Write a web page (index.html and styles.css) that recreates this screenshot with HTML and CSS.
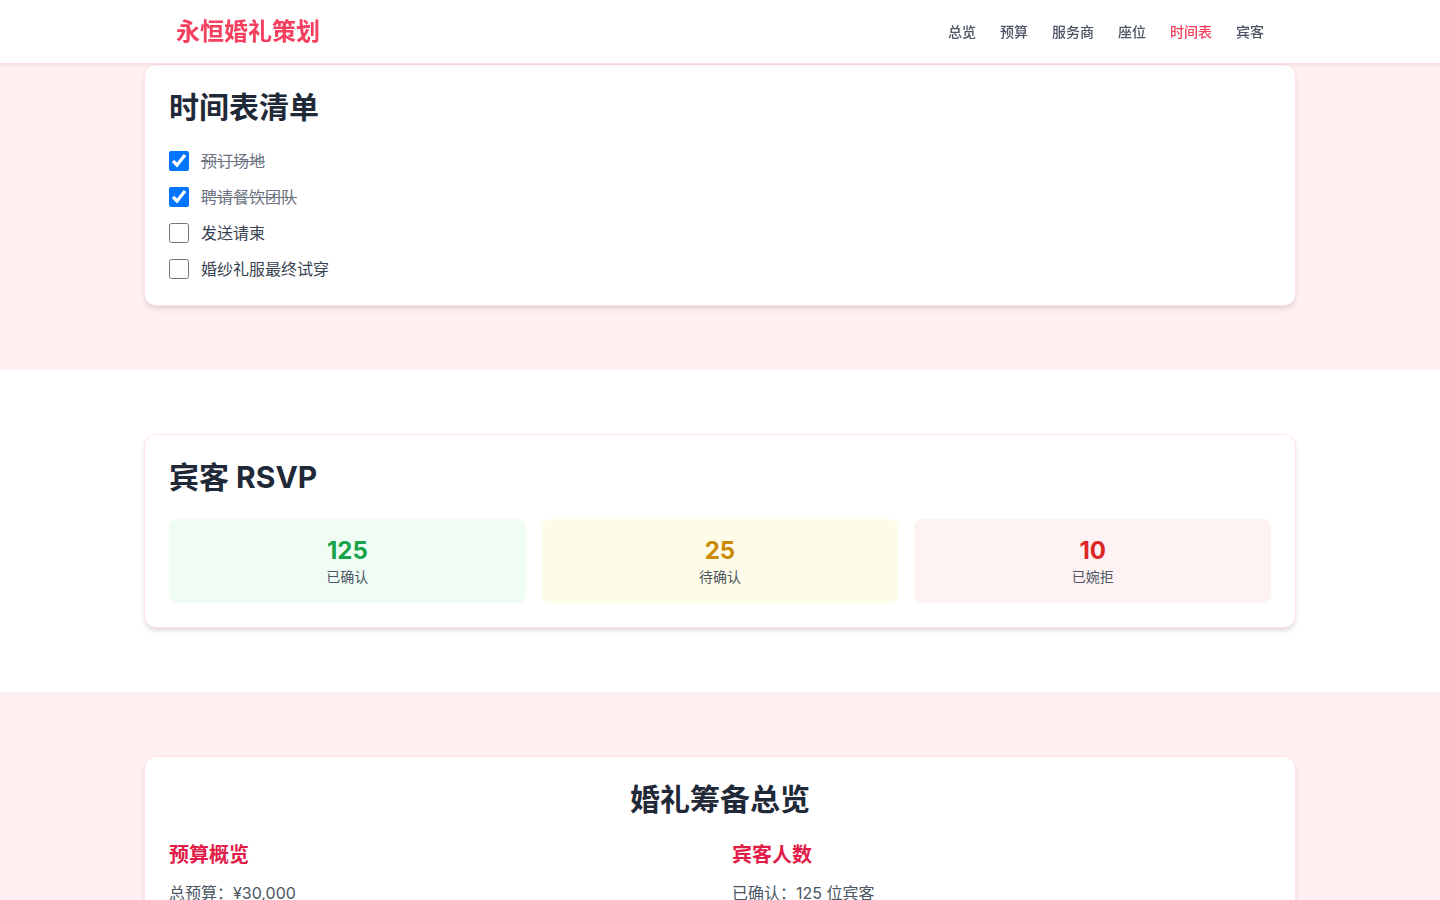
FILE: index.html
```html
<!DOCTYPE html>
<html lang="zh-CN">
<head>
<meta charset="utf-8">
<title>永恒婚礼策划</title>
<link rel="stylesheet" href="styles.css">
</head>
<body>
<header class="site-header">
  <div class="header-inner">
    <div class="logo">永恒婚礼策划</div>
    <nav class="nav">
      <a class="nav-link">总览</a>
      <a class="nav-link">预算</a>
      <a class="nav-link">服务商</a>
      <a class="nav-link">座位</a>
      <a class="nav-link active">时间表</a>
      <a class="nav-link">宾客</a>
    </nav>
  </div>
</header>

<section class="section pink">
  <div class="container">
    <div class="card">
      <h2 class="card-title">时间表清单</h2>
      <ul class="checklist">
        <li class="check-item done"><input type="checkbox" checked><span>预订场地</span></li>
        <li class="check-item done"><input type="checkbox" checked><span>聘请餐饮团队</span></li>
        <li class="check-item"><input type="checkbox"><span>发送请柬</span></li>
        <li class="check-item"><input type="checkbox"><span>婚纱礼服最终试穿</span></li>
      </ul>
    </div>
  </div>
</section>

<section class="section white">
  <div class="container">
    <div class="card">
      <h2 class="card-title rsvp-title">宾客 RSVP</h2>
      <div class="stats">
        <div class="stat green"><div class="stat-num">125</div><div class="stat-label">已确认</div></div>
        <div class="stat yellow"><div class="stat-num">25</div><div class="stat-label">待确认</div></div>
        <div class="stat red"><div class="stat-num">10</div><div class="stat-label">已婉拒</div></div>
      </div>
    </div>
  </div>
</section>

<section class="section pink">
  <div class="container">
    <div class="card">
      <h2 class="card-title center">婚礼筹备总览</h2>
      <div class="overview">
        <div class="ov-col">
          <h3 class="ov-head">预算概览</h3>
          <p class="ov-text">总预算：¥30,000</p>
          <p class="ov-text">已支出：¥18,500</p>
        </div>
        <div class="ov-col">
          <h3 class="ov-head">宾客人数</h3>
          <p class="ov-text">已确认：125 位宾客</p>
          <p class="ov-text">待确认：25 位宾客</p>
        </div>
      </div>
    </div>
  </div>
</section>
</body>
</html>
```

FILE: styles.css
```css
* { box-sizing: border-box; }
html, body { margin: 0; padding: 0; }
body {
  font-family: Inter, "Noto Sans CJK SC", sans-serif;
  color: #1f2937;
  background: #ffffff;
}
.site-header {
  position: fixed;
  top: 0; left: 0; right: 0;
  height: 64px;
  background: #ffffff;
  border-bottom: 1px solid #fde2e4;
  box-shadow: 0 1px 3px rgba(0,0,0,0.08);
  z-index: 10;
}
.header-inner {
  max-width: 1152px;
  margin: 0 auto;
  height: 63px;
  padding: 0 32px;
  display: flex;
  align-items: center;
  justify-content: space-between;
}
.logo {
  font-size: 24px;
  font-weight: 700;
  color: #f43f5e;
  line-height: 32px;
}
.nav { display: flex; gap: 24px; }
.nav-link {
  font-size: 14px;
  font-weight: 500;
  color: #4b5563;
  line-height: 20px;
}
.nav-link.active { color: #f43f5e; }

.section { padding: 64px 0; }
.section.pink { background: #fff1f2; }
.section.white { background: #ffffff; }
.container { max-width: 1152px; margin: 0 auto; }
.card {
  background: #ffffff;
  border: 1px solid #ffe4e6;
  border-radius: 12px;
  box-shadow: 0 4px 6px -1px rgba(0,0,0,0.1), 0 2px 4px -2px rgba(0,0,0,0.1);
  padding: 24px;
}
.card-title {
  margin: 0 0 24px;
  font-size: 30px;
  line-height: 36px;
  font-weight: 700;
  color: #1f2937;
}
.card-title.center { text-align: center; }

.checklist { list-style: none; margin: 0; padding: 0; display: flex; flex-direction: column; gap: 12px; }
.check-item { display: flex; align-items: center; gap: 12px; font-size: 16px; line-height: 24px; color: #374151; }
.check-item input { width: 20px; height: 20px; margin: 0; }
.check-item.done span { color: #6b7280; text-decoration: line-through; }

.stats { display: grid; grid-template-columns: repeat(3, 1fr); gap: 16px; }
.stat { border-radius: 8px; padding: 16px; text-align: center; }
.stat.green { background: #f0fdf4; }
.stat.yellow { background: #fefce8; }
.stat.red { background: #fef2f2; }
.stat-num { font-size: 24px; line-height: 32px; font-weight: 700; }
.green .stat-num { color: #16a34a; }
.yellow .stat-num { color: #ca8a04; }
.red .stat-num { color: #dc2626; }
.stat-label { font-size: 14px; line-height: 20px; color: #4b5563; }

.overview { display: grid; grid-template-columns: 1fr 1fr; gap: 24px; }
.ov-head { margin: 0 0 12px; font-size: 20px; line-height: 28px; font-weight: 600; color: #e11d48; }
.ov-text { margin: 0 0 8px; font-size: 16px; line-height: 24px; color: #4b5563; }
```
